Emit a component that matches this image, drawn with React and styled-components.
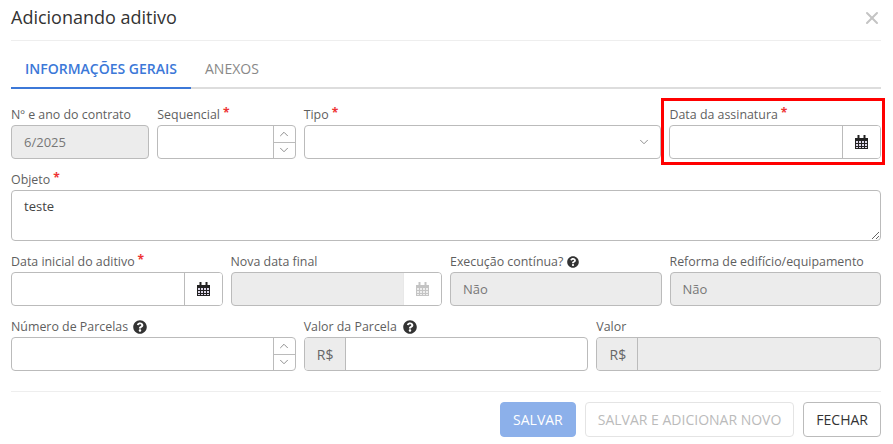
import styled, { createGlobalStyle } from "styled-components";
import { FaQuestionCircle } from "react-icons/fa";
import { ChevronDown, ChevronUp, X } from "lucide-react";

const GlobalStyle = createGlobalStyle`
  * {
    box-sizing: border-box;
  }
  body {
    margin: 0;
    background: #fff;
    font-family: "Open Sans", "Liberation Sans", sans-serif;
    color: #333;
  }
`;

const CalendarIcon = ({ muted }) => (
  <svg width="13" height="14" viewBox="0 0 13 14">
    <rect x="0" y="5" width="13" height="9" fill={muted ? "#eee" : "#ded8ea"} />
    <path
      fill={muted ? "#c4c4c4" : "#222"}
      fillRule="evenodd"
      d="M2.5 0h2v3h4V0h2v3H13v11H0V3h2.5zM1 6v2h2V6zm3 0v2h2V6zm3 0v2h2V6zm3 0v2h2V6zM1 9v2h2V9zm3 0v2h2V9zm3 0v2h2V9zm3 0v2h2V9zM1 12v1h2v-1zm3 0v1h2v-1zm3 0v1h2v-1zm3 0v1h2v-1z"
    />
  </svg>
);

const Modal = styled.div`
  width: 893px;
  height: 444px;
  padding: 0 12px 0 11px;
  overflow: hidden;
`;

const Header = styled.header`
  height: 41px;
  display: flex;
  align-items: center;
  justify-content: space-between;
  padding-bottom: 7px;
  border-bottom: 1px solid #eee;
`;

const Title = styled.h4`
  margin: 0;
  font-size: 18px;
  line-height: 24px;
  font-weight: 400;
  color: #333;
`;

const CloseButton = styled.span`
  display: flex;
  margin-right: -1px;
  margin-top: 3px;
  color: #c4c4c4;
`;

const Tabs = styled.nav`
  display: flex;
  height: 48px;
  margin-bottom: 16px;
  border-bottom: 2px solid #ddd;
`;

const Tab = styled.a`
  height: 48px;
  padding: 8px 14px 0;
  display: flex;
  align-items: center;
  font-size: 14px;
  font-weight: ${({ $active }) => ($active ? 600 : 400)};
  color: ${({ $active }) => ($active ? "#3c78d8" : "#888")};
  border-bottom: 2px solid ${({ $active }) => ($active ? "#3c78d8" : "transparent")};
`;

const Row = styled.div`
  display: grid;
  grid-template-columns: repeat(12, 1fr);
  column-gap: 8px;
  margin-bottom: 11px;
`;

const Field = styled.div`
  position: relative;
  grid-column: span ${({ $span }) => $span};
  min-width: 0;
`;

const Highlight = styled.div`
  position: absolute;
  top: -7px;
  left: -8px;
  right: -4px;
  bottom: -6px;
  border: 3px solid #f00;
  pointer-events: none;
`;

const Label = styled.label`
  display: flex;
  align-items: center;
  gap: 3px;
  height: 20px;
  padding-bottom: 1px;
  font-size: 12.4px;
  font-weight: 500;
  color: #5f5f5f;
  white-space: nowrap;
`;

const Required = styled.span`
  color: #e33;
  font-size: 12px;
  font-weight: 700;
  line-height: 12px;
  margin-top: -3px;
`;

const Help = styled(FaQuestionCircle)`
  font-size: ${({ $size }) => $size}px;
  color: #333;
  margin-left: ${({ $gap }) => $gap}px;
`;

const Control = styled.div`
  display: flex;
  height: 34px;
  border: 1px solid #bbb;
  border-radius: 4px;
  overflow: hidden;
  background: ${({ $disabled }) => ($disabled ? "#ececec" : "#fff")};
`;

const Input = styled.input`
  flex: 1;
  min-width: 0;
  height: 100%;
  border: 0;
  outline: 0;
  padding: 0 12px;
  background: transparent;
  font: inherit;
  font-size: 13px;
  color: #777;
`;

const Spinner = styled.div`
  width: 22px;
  display: flex;
  flex-direction: column;
  border-left: 1px solid #bbb;
`;

const SpinButton = styled.span`
  flex: 1;
  display: flex;
  align-items: center;
  justify-content: center;
  color: #777;
  & + & {
    border-top: 1px solid #bbb;
  }
`;

const SelectArrow = styled.span`
  display: flex;
  align-items: center;
  padding-right: 9px;
  color: #777;
`;

const CalendarAddon = styled.span`
  width: 38px;
  display: flex;
  align-items: center;
  justify-content: center;
  background: #fff;
  border-left: 1px solid ${({ $disabled }) => ($disabled ? "#e8e8e8" : "#bbb")};
`;

const Prefix = styled.span`
  width: 41px;
  padding-left: 1px;
  display: flex;
  align-items: center;
  justify-content: center;
  font-size: 14px;
  color: #666;
  background: #ececec;
  border-right: 1px solid #bbb;
`;

const TextArea = styled.textarea`
  display: block;
  width: 100%;
  height: 51px;
  padding: 5px 12px;
  border: 1px solid #bbb;
  border-radius: 4px;
  outline: 0;
  font: inherit;
  font-size: 13px;
  line-height: 20px;
  color: #444;
`;

const Footer = styled.footer`
  display: flex;
  justify-content: flex-end;
  gap: 9px;
  margin-top: 20px;
  padding-top: 10px;
  border-top: 1px solid #eee;
`;

const Button = styled.button`
  height: 35px;
  padding: 0 12px;
  border-radius: 4px;
  font: inherit;
  font-size: 14px;
  border: 1px solid ${({ $variant }) => ({ primary: "#8cb0ea", ghost: "#e4e4e4", plain: "#bbb" }[$variant])};
  background: ${({ $variant }) => ($variant === "primary" ? "#8cb0ea" : "#fff")};
  color: ${({ $variant }) => ({ primary: "#fff", ghost: "#bbb", plain: "#333" }[$variant])};
  font-weight: ${({ $variant }) => ($variant === "primary" ? 500 : 400)};
`;

const NumberControl = () => (
  <Control>
    <Input />
    <Spinner>
      <SpinButton><ChevronUp size={14} strokeWidth={1.4} /></SpinButton>
      <SpinButton><ChevronDown size={14} strokeWidth={1.4} /></SpinButton>
    </Spinner>
  </Control>
);

const DateControl = ({ disabled }) => (
  <Control $disabled={disabled}>
    <Input readOnly={disabled} />
    <CalendarAddon $disabled={disabled}>
      <CalendarIcon muted={disabled} />
    </CalendarAddon>
  </Control>
);

const ReadOnlyControl = ({ value }) => (
  <Control $disabled>
    <Input readOnly value={value} />
  </Control>
);

const App = () => {
  return (
    <Modal>
      <GlobalStyle />
      <Header>
        <Title>Adicionando aditivo</Title>
        <CloseButton><X size={20} strokeWidth={2.4} /></CloseButton>
      </Header>

      <Tabs>
        <Tab $active>INFORMAÇÕES GERAIS</Tab>
        <Tab>ANEXOS</Tab>
      </Tabs>

      <Row>
        <Field $span={2}>
          <Label>Nº e ano do contrato</Label>
          <ReadOnlyControl value="6/2025" />
        </Field>
        <Field $span={2}>
          <Label>Sequencial <Required>*</Required></Label>
          <NumberControl />
        </Field>
        <Field $span={5}>
          <Label>Tipo <Required>*</Required></Label>
          <Control>
            <Input />
            <SelectArrow><ChevronDown size={14} strokeWidth={1.4} /></SelectArrow>
          </Control>
        </Field>
        <Field $span={3}>
          <Highlight />
          <Label>Data da assinatura <Required>*</Required></Label>
          <DateControl />
        </Field>
      </Row>

      <Row>
        <Field $span={12}>
          <Label>Objeto <Required>*</Required></Label>
          <TextArea defaultValue="teste" />
        </Field>
      </Row>

      <Row>
        <Field $span={3}>
          <Label>Data inicial do aditivo <Required>*</Required></Label>
          <DateControl />
        </Field>
        <Field $span={3}>
          <Label>Nova data final</Label>
          <DateControl disabled />
        </Field>
        <Field $span={3}>
          <Label>Execução contínua? <Help $size={12} $gap={1} /></Label>
          <ReadOnlyControl value="Não" />
        </Field>
        <Field $span={3}>
          <Label>Reforma de edifício/equipamento</Label>
          <ReadOnlyControl value="Não" />
        </Field>
      </Row>

      <Row>
        <Field $span={4}>
          <Label>Número de Parcelas <Help $size={14} $gap={2} /></Label>
          <NumberControl />
        </Field>
        <Field $span={4}>
          <Label>Valor da Parcela <Help $size={14} $gap={3} /></Label>
          <Control>
            <Prefix>R$</Prefix>
            <Input />
          </Control>
        </Field>
        <Field $span={4}>
          <Label>Valor</Label>
          <Control $disabled>
            <Prefix>R$</Prefix>
            <Input readOnly />
          </Control>
        </Field>
      </Row>

      <Footer>
        <Button $variant="primary">SALVAR</Button>
        <Button $variant="ghost">SALVAR E ADICIONAR NOVO</Button>
        <Button $variant="plain">FECHAR</Button>
      </Footer>
    </Modal>
  );
};

export default App;
